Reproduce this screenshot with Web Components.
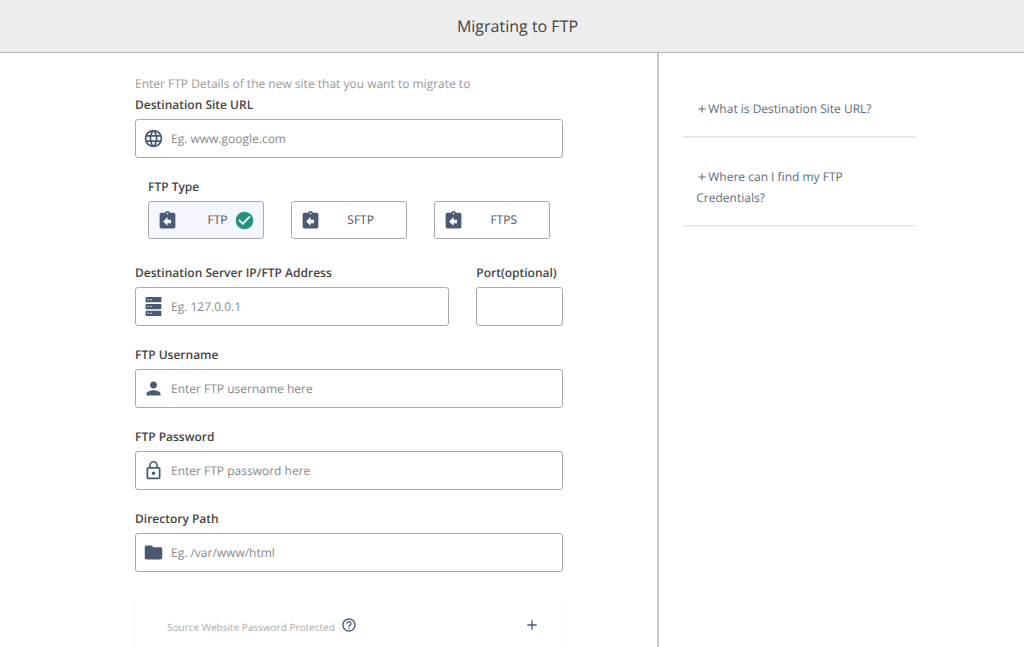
<!DOCTYPE html>
<html lang="en">
<head>
<meta charset="utf-8">
<meta name="viewport" content="width=device-width, initial-scale=1">
<title>Migrating to FTP</title>
<style>
  body { margin: 0; background: #fff; color: #444; font: 12px/20px "Open Sans", "Noto Sans", sans-serif; text-rendering: geometricPrecision; }
</style>
</head>
<body>
<migrate-page>
  <page-header slot="header">Migrating to FTP</page-header>
  <ftp-form slot="main"></ftp-form>
  <help-item slot="help">What is Destination Site URL?</help-item>
  <help-item slot="help">Where can I find my FTP Credentials?</help-item>
</migrate-page>

<script>
const base = '*{box-sizing:border-box} :host{display:block} svg{display:block;fill:currentColor} button,input{text-rendering:inherit}';

function define(name, css, html) {
  const template = document.createElement('template');
  customElements.define(name, class extends HTMLElement {
    connectedCallback() {
      if (this.shadowRoot) return;
      template.innerHTML = `<style>${base}${css}</style>${typeof html === 'function' ? html(this) : html}`;
      this.attachShadow({ mode: 'open' }).append(template.content.cloneNode(true));
    }
  });
}

const icons = {
  globe: '<path d="M11.99 2C6.47 2 2 6.48 2 12s4.47 10 9.99 10C17.52 22 22 17.52 22 12S17.52 2 11.99 2zm6.93 6h-2.95c-.32-1.25-.78-2.45-1.38-3.56 1.84.63 3.37 1.91 4.33 3.56zM12 4.04c.83 1.2 1.48 2.53 1.91 3.96h-3.82c.43-1.43 1.08-2.76 1.91-3.96zM4.26 14C4.1 13.36 4 12.69 4 12s.1-1.36.26-2h3.38c-.08.66-.14 1.32-.14 2s.06 1.34.14 2H4.26zm.82 2h2.95c.32 1.25.78 2.45 1.38 3.56-1.84-.63-3.37-1.9-4.33-3.56zm2.95-8H5.08c.96-1.66 2.49-2.93 4.33-3.56C8.81 5.55 8.35 6.75 8.03 8zM12 19.96c-.83-1.2-1.48-2.53-1.91-3.96h3.82c-.43 1.43-1.08 2.76-1.91 3.96zM14.34 14H9.66c-.09-.66-.16-1.32-.16-2s.07-1.35.16-2h4.68c.09.65.16 1.32.16 2s-.07 1.34-.16 2zm.25 5.56c.6-1.11 1.06-2.31 1.38-3.56h2.95c-.96 1.65-2.49 2.93-4.33 3.56zM16.36 14c.08-.66.14-1.32.14-2s-.06-1.34-.14-2h3.38c.16.64.26 1.31.26 2s-.1 1.36-.26 2h-3.38z"/>',
  server: '<path fill-rule="evenodd" d="M3.6 1.2h16.8q.6 0 .6.6v4.8q0 .6-.6.6H3.6q-.6 0-.6-.6V1.8q0-.6.6-.6zM5.2 3.5v1.4h1.4v-1.4zM8.6 3.5v1.4h1.4v-1.4zM3.6 9h16.8q.6 0 .6.6v4.8q0 .6-.6.6H3.6q-.6 0-.6-.6V9.6q0-.6.6-.6zM5.2 11.3v1.4h1.4v-1.4zM8.6 11.3v1.4h1.4v-1.4zM3.6 16.8h16.8q.6 0 .6.6v4.8q0 .6-.6.6H3.6q-.6 0-.6-.6v-4.8q0-.6.6-.6zM5.2 19.1v1.4h1.4v-1.4zM8.6 19.1v1.4h1.4v-1.4z"/>',
  person: '<path d="M12 12c2.21 0 4-1.79 4-4s-1.79-4-4-4-4 1.79-4 4 1.79 4 4 4zm0 2c-2.67 0-8 1.34-8 4v2h16v-2c0-2.66-5.33-4-8-4z"/>',
  lock: '<path d="M12 17c1.1 0 2-.9 2-2s-.9-2-2-2-2 .9-2 2 .9 2 2 2zm6-9h-1V6c0-2.76-2.24-5-5-5S7 3.24 7 6v2H6c-1.1 0-2 .9-2 2v10c0 1.1.9 2 2 2h12c1.1 0 2-.9 2-2V10c0-1.1-.9-2-2-2zM8.9 6c0-1.71 1.39-3.1 3.1-3.1s3.1 1.39 3.1 3.1v2H8.9V6zM18 20H6V10h12v10z"/>',
  folder: '<path d="M10 4H4c-1.1 0-1.99.9-1.99 2L2 18c0 1.1.9 2 2 2h16c1.1 0 2-.9 2-2V8c0-1.1-.9-2-2-2h-8l-2-2z"/>',
  clipboard: '<path d="M19 3h-4.18C14.4 1.84 13.3 1 12 1s-2.4.84-2.82 2H5c-1.1 0-2 .9-2 2v14c0 1.1.9 2 2 2h14c1.1 0 2-.9 2-2V5c0-1.1-.9-2-2-2zm-7 0c.55 0 1 .45 1 1s-.45 1-1 1-1-.45-1-1 .45-1 1-1zm4 12h-4v3l-5-5 5-5v3h4v4z"/>',
  check: '<path d="M12 2C6.48 2 2 6.48 2 12s4.48 10 10 10 10-4.48 10-10S17.52 2 12 2zm-2 15l-5-5 1.41-1.41L10 14.17l7.59-7.59L19 8l-9 9z"/>',
  help: '<path d="M11 18h2v-2h-2v2zm1-16C6.48 2 2 6.48 2 12s4.48 10 10 10 10-4.48 10-10S17.52 2 12 2zm0 18c-4.41 0-8-3.59-8-8s3.59-8 8-8 8 3.59 8 8-3.59 8-8 8zm0-14c-2.21 0-4 1.79-4 4h2c0-1.1.9-2 2-2s2 .9 2 2c0 2-3 1.75-3 5h2c0-2.25 3-2.5 3-5 0-2.21-1.79-4-4-4z"/>',
  plus: '<path d="M19 13h-6v6h-2v-6H5v-2h6V5h2v6h6v2z"/>'
};

define('ui-icon',
  ':host{display:inline-block;flex:none;width:var(--icon-size,21px);height:var(--icon-size,21px)} svg{width:100%;height:100%}',
  el => `<svg viewBox="0 0 24 24" aria-hidden="true">${icons[el.getAttribute('name')]}</svg>`);

define('page-header', `
  :host{background:#eee;border-bottom:1px solid #b0b0b0}
  h1{margin:0;padding:14px 0 14px 11px;font-size:16px;line-height:24px;font-weight:400;text-align:center;color:#444}`,
  '<h1><slot></slot></h1>');

define('migrate-page', `
  :host{display:flex;flex-direction:column;min-height:100vh}
  .columns{flex:1;display:grid;grid-template-columns:9fr 5fr}
  main{padding:21px 95px 0 135px}
  aside{margin-left:-1px;border-left:2px solid #c8c8c8;padding:31px 108px 0 23px;display:flex;flex-direction:column;gap:16px}`,
  `<slot name="header"></slot>
   <div class="columns">
     <main><slot name="main"></slot></main>
     <aside aria-label="Help"><slot name="help"></slot></aside>
   </div>`);

define('help-item', `
  :host{box-shadow:0 1px 2px rgba(0,0,0,.16);clip-path:inset(0 0 -4px 0)}
  button{display:block;width:100%;padding:14px 14px 17px;border:0;background:none;font:inherit;line-height:21px;text-align:left;color:#5b6b80;cursor:pointer}
  ui-icon{--icon-size:12px;vertical-align:-2px}`,
  '<button type="button" aria-expanded="false"><ui-icon name="plus"></ui-icon><slot></slot></button>');

define('text-field', `
  label{display:block;margin-bottom:3px;font-weight:600;line-height:22px;color:#444}
  .box{display:flex;align-items:center;gap:7px;height:39px;padding:0 7px;border:1px solid #aaa;border-radius:3px;color:#4a5a73}
  .box:focus-within{border-color:#4a5a73}
  input{flex:1;min-width:0;height:100%;padding:0;border:0;outline:0;background:none;font:inherit;color:#444}
  input::placeholder{color:#888;opacity:1}`,
  el => `<label for="input">${el.getAttribute('label')}</label>
   <div class="box">${el.hasAttribute('icon') ? `<ui-icon name="${el.getAttribute('icon')}"></ui-icon>` : ''}
   <input id="input" type="${el.getAttribute('type') || 'text'}" placeholder="${el.getAttribute('placeholder') || ''}"></div>`);

define('type-picker', `
  :host{padding:0 13px}
  fieldset{margin:0;padding:0;border:0;min-width:0}
  legend{padding:0;margin-bottom:3px;font-weight:600;line-height:22px;color:#444}
  .options{display:grid;grid-template-columns:repeat(3,1fr);gap:27px}
  label{position:relative;display:flex;align-items:center;height:38px;padding:0 6px 0 8px;border:1px solid #aaa;border-radius:3px;color:#4a5a73;cursor:pointer}
  label:has(input:checked){background:#f4f7ff}
  label:has(input:focus-visible){outline:2px solid #4a5a73}
  input{appearance:none;position:absolute;inset:0;margin:0;outline:0;cursor:pointer}
  span{flex:1;text-align:center;color:#555}
  .tick{display:none;position:absolute;right:8px;color:#23937f;background:radial-gradient(#fff 50%,transparent 50%)}
  input:checked ~ .tick{display:block}`,
  `<fieldset><legend>FTP Type</legend><div class="options">
   ${['FTP', 'SFTP', 'FTPS'].map((name, i) => `<label><input type="radio" name="type" value="${name}"${i ? '' : ' checked'}><ui-icon name="clipboard"></ui-icon><span>${name}</span><ui-icon class="tick" name="check"></ui-icon></label>`).join('')}
   </div></fieldset>`);

define('expand-row', `
  :host{box-shadow:0 1px 2px rgba(0,0,0,.06)}
  button{display:flex;align-items:center;width:100%;padding:16px 23px 16px 32px;border:0;background:none;font:inherit;font-size:10px;color:#aaa;text-align:left;cursor:pointer}
  span{padding-top:4px}
  ui-icon{--icon-size:16px;color:#4a5a73}
  .help{margin-left:6px}
  .plus{margin-left:auto}`,
  `<button type="button" aria-expanded="false"><span><slot></slot></span>
   <ui-icon class="help" name="help"></ui-icon><ui-icon class="plus" name="plus"></ui-icon></button>`);

define('ftp-form', `
  p{margin:0;color:#999}
  .fields{display:flex;flex-direction:column;gap:18px}
  type-picker{margin-bottom:5px}
  .pair{display:grid;grid-template-columns:1fr 87px;gap:27px}
  expand-row{margin-top:7px}`,
  `<form>
    <p>Enter FTP Details of the new site that you want to migrate to</p>
    <div class="fields">
      <text-field label="Destination Site URL" icon="globe" placeholder="Eg. www.google.com"></text-field>
      <type-picker></type-picker>
      <div class="pair">
        <text-field label="Destination Server IP/FTP Address" icon="server" placeholder="Eg. 127.0.0.1"></text-field>
        <text-field label="Port(optional)"></text-field>
      </div>
      <text-field label="FTP Username" icon="person" placeholder="Enter FTP username here"></text-field>
      <text-field label="FTP Password" type="password" icon="lock" placeholder="Enter FTP password here"></text-field>
      <text-field label="Directory Path" icon="folder" placeholder="Eg. /var/www/html"></text-field>
      <expand-row>Source Website Password Protected</expand-row>
    </div>
  </form>`);
</script>
</body>
</html>
